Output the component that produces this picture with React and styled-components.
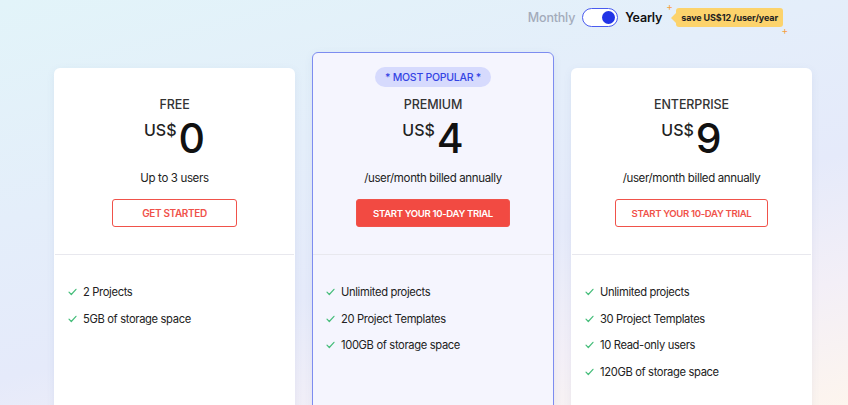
import React from "react";
import styled, { createGlobalStyle } from "styled-components";

const Global = createGlobalStyle`
  html, body { margin: 0; padding: 0; }
  body {
    font-family: Inter, "Noto Sans", sans-serif;
    color: #222;
    width: 848px;
    height: 405px;
    overflow: hidden;
    background: linear-gradient(165deg, #e2f4f9 0%, #e4eefa 35%, #e5eafa 60%, #f3eff7 80%, #fdf5ee 100%);
  }
`;

const Page = styled.div`
  height: 405px;
  display: flex;
  flex-direction: column;
  padding: 0 36px 0 54px;
  box-sizing: border-box;
  overflow: hidden;
`;

const Header = styled.div`
  flex: 0 0 52px;
  display: flex;
  align-items: flex-start;
  justify-content: flex-end;
  padding: 8px 29px 0 0;
  box-sizing: border-box;
`;

const ToggleGroup = styled.div`
  display: flex;
  align-items: center;
  height: 19px;
  gap: 7px;
`;

const Period = styled.span`
  font-size: 12.5px;
  font-weight: ${(p) => (p.$active ? 600 : 500)};
  color: ${(p) => (p.$active ? "#111" : "#a3abba")};
  letter-spacing: -0.2px;
`;

const Switch = styled.div`
  width: 36px;
  height: 19px;
  box-sizing: border-box;
  border: 1.5px solid #4a5bef;
  border-radius: 10px;
  background: #fff;
  display: flex;
  align-items: center;
  justify-content: flex-end;
  padding-right: 2.5px;
`;

const Knob = styled.div`
  width: 13px;
  height: 13px;
  border-radius: 50%;
  background: #2234e6;
`;

const Badge = styled.div`
  position: relative;
  margin-left: 7px;
  height: 19px;
  padding: 0 5px 0 5px;
  background: #fcd36c;
  border-radius: 3px;
  display: flex;
  align-items: center;
  font-size: 9px;
  font-weight: 700;
  color: #222;
  letter-spacing: -0.1px;
  &::before {
    content: "";
    position: absolute;
    left: -5px;
    top: 4.5px;
    border-top: 5px solid transparent;
    border-bottom: 5px solid transparent;
    border-right: 5px solid #fcd36c;
  }
`;

const Spark = styled.span`
  position: absolute;
  font-size: 10px;
  font-weight: 400;
  color: #f5a042;
  line-height: 1;
  ${(p) => p.$pos}
`;

const Cards = styled.div`
  display: flex;
  gap: 17px;
  align-items: flex-start;
`;

const Card = styled.div`
  flex: 0 0 ${(p) => (p.$featured ? 242 : 241)}px;
  margin-top: ${(p) => (p.$featured ? 0 : 16)}px;
  height: ${(p) => (p.$featured ? 380 : 364)}px;
  box-sizing: border-box;
  background: ${(p) => (p.$featured ? "#f5f5fe" : "#fff")};
  border: 1px solid ${(p) => (p.$featured ? "#7d8cf0" : "transparent")};
  border-radius: 6px;
  box-shadow: 0 2px 8px rgba(80, 100, 160, 0.08);
  display: flex;
  flex-direction: column;
`;

const Top = styled.div`
  display: flex;
  flex-direction: column;
  align-items: center;
  padding-top: ${(p) => (p.$featured ? 14 : 28)}px;
  height: ${(p) => (p.$featured ? 202 : 186)}px;
  box-sizing: border-box;
  border-bottom: 1px solid #e8e8ee;
`;

const Pill = styled.div`
  height: 20px;
  padding: 0 10px;
  border-radius: 10px;
  background: #d6dafd;
  color: #3444e4;
  font-size: 10.5px;
  font-weight: 500;
  letter-spacing: -0.25px;
  display: flex;
  align-items: center;
  margin-bottom: 10px;
`;

const Title = styled.div`
  font-size: 12.5px;
  font-weight: 500;
  color: #333;
  line-height: 15px;
  letter-spacing: -0.1px;
`;

const Price = styled.div`
  display: flex;
  align-items: flex-start;
  margin-top: 6px;
  height: 40px;
`;

const Currency = styled.span`
  font-size: 16px;
  font-weight: 500;
  line-height: 1;
  margin-top: 4px;
  margin-right: 2px;
`;

const Amount = styled.span`
  font-size: 41px;
  font-weight: 500;
  line-height: 40px;
  color: #111;
`;

const Sub = styled.div`
  margin-top: 13px;
  font-size: 11.5px;
  letter-spacing: -0.35px;
  color: #222;
  line-height: 14px;
`;

const Button = styled.div`
  margin-top: 14px;
  height: 28px;
  padding: 0 ${(p) => (p.$wide ? 16 : 29)}px;
  box-sizing: border-box;
  border-radius: 3px;
  border: 1px solid #f0524a;
  background: ${(p) => (p.$solid ? "#f24a42" : "#fff")};
  color: ${(p) => (p.$solid ? "#fff" : "#f0524a")};
  font-size: ${(p) => (p.$wide ? 9.6 : 10)}px;
  font-weight: 600;
  display: flex;
  align-items: center;
  letter-spacing: -0.35px;
`;

const Features = styled.ul`
  list-style: none;
  margin: 0;
  padding: 30px 0 0 13px;
  display: flex;
  flex-direction: column;
  gap: 12px;
`;

const Feature = styled.li`
  display: flex;
  align-items: center;
  gap: 6px;
  font-size: 11.2px;
  letter-spacing: -0.35px;
  line-height: 14.5px;
  color: #222;
`;

const Check = () => (
  <svg width="9" height="8" viewBox="0 0 9 8" fill="none">
    <path d="M1 4.2 L3.3 6.5 L8 1.3" stroke="#45bd7a" strokeWidth="1.2" strokeLinecap="round" strokeLinejoin="round" />
  </svg>
);

const plans = [
  {
    name: "FREE",
    amount: "0",
    sub: "Up to 3 users",
    cta: "GET STARTED",
    features: ["2 Projects", "5GB of storage space"],
  },
  {
    name: "PREMIUM",
    amount: "4",
    sub: "/user/month billed annually",
    cta: "START YOUR 10-DAY TRIAL",
    featured: true,
    features: ["Unlimited projects", "20 Project Templates", "100GB of storage space"],
  },
  {
    name: "ENTERPRISE",
    amount: "9",
    sub: "/user/month billed annually",
    cta: "START YOUR 10-DAY TRIAL",
    features: ["Unlimited projects", "30 Project Templates", "10 Read-only users", "120GB of storage space"],
  },
];

export default function App() {
  return (
    <>
      <Global />
      <Page>
        <Header>
          <ToggleGroup>
            <Period>Monthly</Period>
            <Switch>
              <Knob />
            </Switch>
            <Period $active>Yearly</Period>
            <Badge>
              save US$12 /user/year
              <Spark $pos="left: -10px; top: -7px;">+</Spark>
              <Spark $pos="right: -5px; bottom: -8px;">+</Spark>
            </Badge>
          </ToggleGroup>
        </Header>
        <Cards>
          {plans.map((p) => (
            <Card key={p.name} $featured={p.featured}>
              <Top $featured={p.featured}>
                {p.featured && <Pill>* MOST POPULAR *</Pill>}
                <Title>{p.name}</Title>
                <Price>
                  <Currency>US$</Currency>
                  <Amount>{p.amount}</Amount>
                </Price>
                <Sub>{p.sub}</Sub>
                <Button $solid={p.featured} $wide={p.cta.length > 12}>{p.cta}</Button>
              </Top>
              <Features>
                {p.features.map((f) => (
                  <Feature key={f}>
                    <Check />
                    {f}
                  </Feature>
                ))}
              </Features>
            </Card>
          ))}
        </Cards>
      </Page>
    </>
  );
}
